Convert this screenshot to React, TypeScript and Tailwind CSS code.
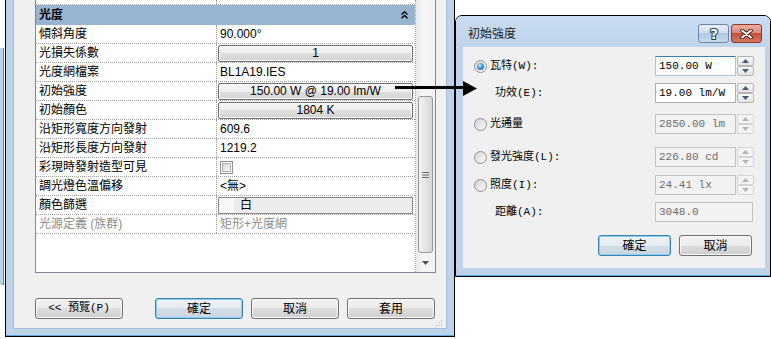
import React from 'react';

type RowKind = 'text' | 'button' | 'check' | 'swatch' | 'muted';

const rows: { label: string; value: string; kind: RowKind }[] = [
  { label: '傾斜角度', value: '90.000°', kind: 'text' },
  { label: '光損失係數', value: '1', kind: 'button' },
  { label: '光度網檔案', value: 'BL1A19.IES', kind: 'text' },
  { label: '初始強度', value: '150.00 W @ 19.00 lm/W', kind: 'button' },
  { label: '初始顏色', value: '1804 K', kind: 'button' },
  { label: '沿矩形寬度方向發射', value: '609.6', kind: 'text' },
  { label: '沿矩形長度方向發射', value: '1219.2', kind: 'text' },
  { label: '彩現時發射造型可見', value: '', kind: 'check' },
  { label: '調光燈色溫偏移', value: '<無>', kind: 'text' },
  { label: '顏色篩選', value: '白', kind: 'swatch' },
  { label: '光源定義 (族群)', value: '矩形+光度網', kind: 'muted' },
];

const winBtn =
  'flex items-center justify-center rounded-[3px] border border-[#707070] bg-[linear-gradient(#f2f2f2_0%,#ebebeb_50%,#dddddd_50%,#cfcfcf_100%)] shadow-[inset_0_0_0_1px_#fbfbfb] text-black';
const defBtn =
  'flex items-center justify-center rounded-[3px] border border-[#3c7fb1] bg-[linear-gradient(#eef3f7_0%,#e4ebf1_50%,#d4dee7_50%,#c9d5df_100%)] shadow-[inset_0_0_0_1px_#8ad0f2] text-black';

function Spinner({ disabled }: { disabled?: boolean }) {
  const box = disabled
    ? 'border-[#d4d4d4] bg-[#f4f4f4]'
    : 'border-[#b5b5b5] bg-[linear-gradient(#fafafa,#e3e3e3)]';
  const tri = disabled ? '#b4b4b4' : '#42598a';
  return (
    <div className="ml-px flex h-[20px] w-[17px] flex-col">
      <div className={`flex h-[10px] items-center justify-center rounded-[2px] border ${box}`}>
        <svg width="7" height="4" viewBox="0 0 7 4">
          <path d="M0 4 L3.5 0 L7 4 Z" fill={tri} />
        </svg>
      </div>
      <div className={`flex h-[10px] items-center justify-center rounded-[2px] border ${box}`}>
        <svg width="7" height="4" viewBox="0 0 7 4">
          <path d="M0 0 L3.5 4 L7 0 Z" fill={tri} />
        </svg>
      </div>
    </div>
  );
}

function Radio({ checked }: { checked?: boolean }) {
  return (
    <div className="flex h-[13px] w-[13px] shrink-0 items-center justify-center rounded-full border border-[#8e8f8f] bg-[linear-gradient(135deg,#d6d6d6,#f8f8f8)]">
      {checked && (
        <div className="h-[7px] w-[7px] rounded-full bg-[radial-gradient(circle_at_40%_35%,#b6ecff,#2a8ad4_55%,#0d4f86)]" />
      )}
    </div>
  );
}

function Field({ value, disabled, focused, wide }: { value: string; disabled?: boolean; focused?: boolean; wide?: boolean }) {
  const look = disabled
    ? 'border-[#c3c3c3] bg-[#f2f2f2] text-[#6d6d6d]'
    : focused
      ? 'border-[#a9c3e0] border-t-[#3d7bad] bg-white text-black'
      : 'border-[#abadb3] bg-white text-black';
  return (
    <div className={`flex h-[20px] items-center border pl-[3px] text-[11px] ${wide ? 'w-[98px]' : 'w-[81px]'} ${look}`}>
      {value}
    </div>
  );
}

function PropertyRow({ label, value, kind }: { label: string; value: string; kind: RowKind }) {
  const muted = kind === 'muted';
  return (
    <div className="flex h-[19px] border-b border-dotted border-[#a0a0a0]">
      <div className={`flex w-[181px] items-center border-r border-dotted border-[#a0a0a0] pl-[3px] ${muted ? 'text-[#8d8d8d]' : ''}`}>
        {label}
      </div>
      <div className="flex flex-1 items-center">
        {kind === 'text' && <span className="pl-[3px]">{value}</span>}
        {kind === 'muted' && <span className="pl-[3px] text-[#8d8d8d]">{value}</span>}
        {kind === 'button' && (
          <div className="ml-px mr-[2px] flex h-[17px] flex-1 items-center justify-center rounded-[2px] border border-[#707070] bg-[linear-gradient(#f6f6f6_0%,#ededed_50%,#dfdfdf_50%,#d3d3d3_100%)] shadow-[inset_0_0_0_1px_#fbfbfb]">
            {value}
          </div>
        )}
        {kind === 'check' && (
          <div className="ml-[3px] flex h-[13px] w-[13px] items-center justify-center border border-[#8f8f8f] bg-white">
            <div className="h-[9px] w-[9px] border border-[#b0b0b0] bg-[linear-gradient(135deg,#d8d8d8,#f6f6f6)]" />
          </div>
        )}
        {kind === 'swatch' && (
          <div className="ml-px mr-[2px] flex h-[17px] flex-1 items-center border border-[#8a8a8a] bg-[#ececec]">
            <div className="h-full w-[15px] bg-[#f8f8f8]" />
            <span className="pl-[6px]">{value}</span>
          </div>
        )}
      </div>
    </div>
  );
}

export default function App() {
  return (
    <div className="relative h-[339px] w-[771px] overflow-hidden bg-white font-['Liberation_Sans','Noto_Sans_CJK_TC',sans-serif] text-[12px] leading-none text-black">
      {/* edge of a window behind */}
      <div className="absolute left-0 top-[48px] h-[237px] w-[4px] rounded-bl-[4px] border-r border-b border-[#6f8096] bg-[#bcd3ea]" />

      {/* main properties window */}
      <div className="absolute left-[5px] top-0 flex h-[337px] w-[450px] flex-col border-x border-b border-black">
        <div className="flex flex-1 flex-col border-b border-[#5ea9dc] bg-[#bcd3ea] px-[7px] pb-[6px]">
          <div className="relative flex flex-1 flex-col border-x border-b border-[#a7bdd6] bg-[#f0f0f0] pl-[21px] pr-[10px]">
            <div className="flex h-[273px] border-x border-b border-[#828790] bg-white">
              <div className="flex w-[380px] flex-col border-r border-dotted border-[#a0a0a0]">
                <div className="flex h-[5px] border-b border-dotted border-[#a0a0a0]">
                  <div className="w-[181px] border-r border-dotted border-[#a0a0a0]" />
                </div>
                <div className="flex h-[20px] items-center justify-between bg-[#99b4d1] pl-[3px] pr-[7px] font-bold">
                  <span>光度</span>
                  <svg width="7" height="8" viewBox="0 0 7 8">
                    <path d="M0.5 3.5 L3.5 0.8 L6.5 3.5 M0.5 7.2 L3.5 4.5 L6.5 7.2" fill="none" stroke="#000" strokeWidth="1.4" />
                  </svg>
                </div>
                {rows.map((r) => (
                  <PropertyRow key={r.label} {...r} />
                ))}
              </div>
              {/* scrollbar */}
              <div className="flex flex-1 flex-col items-center bg-[linear-gradient(90deg,#e9e9e9,#f6f6f6_40%,#f1f1f1)]">
                <div className="mt-[96px] flex h-[157px] w-[15px] items-center justify-center rounded-[3px] border border-[#979797] bg-[linear-gradient(90deg,#f4f4f4,#e6e6e6_45%,#d6d6d6)]">
                  <svg width="7" height="8" viewBox="0 0 7 8">
                    <path d="M0 1.5 H7 M0 4 H7 M0 6.5 H7" stroke="#6a6a6a" strokeWidth="1" />
                  </svg>
                </div>
                <div className="mt-[8px]">
                  <svg width="7" height="4" viewBox="0 0 7 4">
                    <path d="M0 0 L3.5 4 L7 0 Z" fill="#4d4d4d" />
                  </svg>
                </div>
              </div>
            </div>

            <div className="mt-[25px] flex h-[21px]">
              <div className={`${winBtn} w-[88px] font-['Liberation_Mono','Noto_Sans_CJK_TC',monospace] text-[11px]`}>&lt;&lt; 預覽(P)</div>
              <div className={`${defBtn} ml-[32px] w-[88px]`}>確定</div>
              <div className={`${winBtn} ml-[8px] w-[88px]`}>取消</div>
              <div className={`${winBtn} ml-[8px] w-[88px]`}>套用</div>
            </div>

            <svg className="absolute bottom-[1px] right-[3px]" width="7" height="7" viewBox="0 0 7 7">
              <g fill="#b3b3b3">
                <rect x="5" y="0" width="1" height="1" />
                <rect x="2.5" y="2.5" width="1" height="1" />
                <rect x="5" y="2.5" width="1" height="1" />
                <rect x="0" y="5" width="1" height="1" />
                <rect x="2.5" y="5" width="1" height="1" />
                <rect x="5" y="5" width="1" height="1" />
              </g>
            </svg>
          </div>
        </div>
      </div>

      {/* 初始強度 dialog */}
      <div className="absolute left-[455px] top-[15px] flex h-[262px] w-[316px] flex-col overflow-hidden rounded-t-[7px] border border-black">
        <div className="flex flex-1 flex-col border-b border-[#5ea9dc] bg-[linear-gradient(#c9dcf1,#bcd3ea_40px)]">
          <div className="flex h-[31px] items-start justify-between pl-[12px] pr-[8px] pt-[8px]">
            <span className="flex h-[19px] items-center text-[12px] text-[#1b1b1b]">初始強度</span>
            <div className="flex">
              <div className="flex h-[19px] w-[31px] items-center justify-center rounded-[3px] border border-[#6d86a6] bg-[linear-gradient(#e6eef8_0%,#cddcee_50%,#b0c7e2_50%,#c6d8ec_100%)]">
                <svg width="12" height="15" viewBox="0 0 12 15">
                  <text
                    x="6"
                    y="12.5"
                    textAnchor="middle"
                    fontFamily="DejaVu Sans, sans-serif"
                    fontWeight="bold"
                    fontSize="14"
                    fill="#ffffff"
                    stroke="#203754"
                    strokeWidth="2"
                    paintOrder="stroke"
                  >
                    ?
                  </text>
                </svg>
              </div>
              <div className="ml-[2px] flex h-[19px] w-[31px] items-center justify-center rounded-[3px] border border-[#8b3a2e] bg-[linear-gradient(#eab0a3_0%,#d98775_50%,#c4513a_50%,#d27a63_100%)]">
                <svg width="13" height="10" viewBox="0 0 13 10">
                  <path d="M2 1.5 L11 8.5 M11 1.5 L2 8.5" stroke="#3a1410" strokeWidth="3.6" strokeLinecap="round" />
                  <path d="M2 1.5 L11 8.5 M11 1.5 L2 8.5" stroke="#ffffff" strokeWidth="2" strokeLinecap="round" />
                </svg>
              </div>
            </div>
          </div>

          <div className="mb-[7px] ml-[7px] mr-[5px] flex flex-1 flex-col bg-[#f0f0f0] pl-[11px] pt-[9px] font-['Liberation_Mono','Noto_Sans_CJK_TC',monospace] text-[11px]">
            <div className="flex h-[20px] items-center">
              <div className="flex w-[181px] items-center">
                <Radio checked />
                <span className="ml-[3px]">瓦特(W):</span>
              </div>
              <Field value="150.00 W" focused />
              <Spinner />
            </div>
            <div className="mt-[7px] flex h-[20px] items-center">
              <div className="flex w-[181px] items-center pl-[21px]">功效(E):</div>
              <Field value="19.00 lm/W" />
              <Spinner />
            </div>
            <div className="mt-[11px] flex h-[20px] items-center">
              <div className="flex w-[181px] items-center">
                <Radio />
                <span className="ml-[3px]">光通量</span>
              </div>
              <Field value="2850.00 lm" disabled />
              <Spinner disabled />
            </div>
            <div className="mt-[13px] flex h-[20px] items-center">
              <div className="flex w-[181px] items-center">
                <Radio />
                <span className="ml-[3px]">發光強度(L):</span>
              </div>
              <Field value="226.80 cd" disabled />
              <Spinner disabled />
            </div>
            <div className="mt-[8px] flex h-[20px] items-center">
              <div className="flex w-[181px] items-center">
                <Radio />
                <span className="ml-[3px]">照度(I):</span>
              </div>
              <Field value="24.41 lx" disabled />
              <Spinner disabled />
            </div>
            <div className="mt-[7px] flex h-[20px] items-center">
              <div className="flex w-[181px] items-center pl-[21px]">距離(A):</div>
              <Field value="3048.0" disabled wide />
            </div>
            <div className="mt-[13px] flex h-[21px] font-['Liberation_Sans','Noto_Sans_CJK_TC',sans-serif] text-[12px]">
              <div className={`${defBtn} ml-[124px] w-[73px]`}>確定</div>
              <div className={`${winBtn} ml-[8px] w-[73px]`}>取消</div>
            </div>
          </div>
        </div>
      </div>

      {/* pointer arrow */}
      <svg className="absolute left-[390px] top-[78px]" width="90" height="22" viewBox="0 0 90 22">
        <rect x="5" y="8" width="70" height="3" fill="#000" />
        <path d="M73 3 L87 10.5 L73 18 Z" fill="#000" />
      </svg>
    </div>
  );
}
